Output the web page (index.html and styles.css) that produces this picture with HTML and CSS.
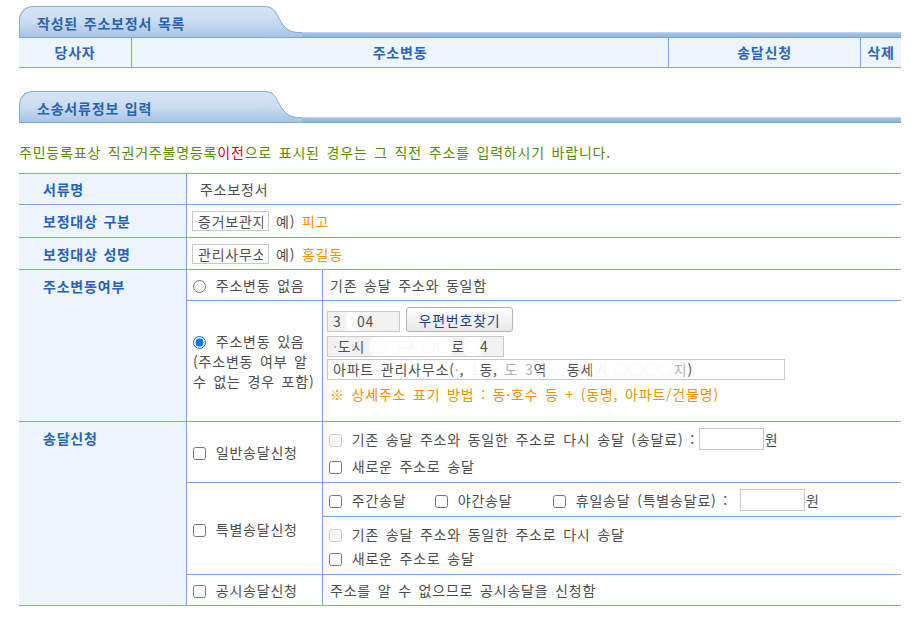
FILE: index.html
```html
<!DOCTYPE html>
<html lang="ko">
<head>
<meta charset="utf-8">
<title>주소보정서</title>
<link rel="stylesheet" href="styles.css">
</head>
<body>
<div class="page">
  <section class="sec">
    <div class="tabhead">
      <div class="tab">작성된 주소보정서 목록</div>
      <svg class="curve" viewBox="0 0 40 31" width="40" height="31"><defs><linearGradient id="g1" x1="0" y1="0" x2="0" y2="31" gradientUnits="userSpaceOnUse"><stop offset="0" stop-color="#d6e5f5"/><stop offset="0.5" stop-color="#cadcf0"/><stop offset="1" stop-color="#a7c4e5"/></linearGradient></defs><path d="M0 0 H2 C10 0 13 4 16 10 C20 18 25 26 36 26 H40 V31 H0 Z" fill="url(#g1)"/><path d="M0 0.5 H2 C10 0.5 13 4.5 16 10.5 C20 18.5 25 26.5 36 26.5 H40" fill="none" stroke="#86acda"/></svg>
      <div class="bar"></div>
    </div>
    <div class="list">
      <div>당사자</div><div>주소변동</div><div>송달신청</div><div>삭제</div>
    </div>
  </section>

  <section class="sec sec2">
    <div class="tabhead">
      <div class="tab">소송서류정보 입력</div>
      <svg class="curve" viewBox="0 0 40 31" width="40" height="31"><defs><linearGradient id="g2" x1="0" y1="0" x2="0" y2="31" gradientUnits="userSpaceOnUse"><stop offset="0" stop-color="#d6e5f5"/><stop offset="0.5" stop-color="#cadcf0"/><stop offset="1" stop-color="#a7c4e5"/></linearGradient></defs><path d="M0 0 H2 C10 0 13 4 16 10 C20 18 25 26 36 26 H40 V31 H0 Z" fill="url(#g2)"/><path d="M0 0.5 H2 C10 0.5 13 4.5 16 10.5 C20 18.5 25 26.5 36 26.5 H40" fill="none" stroke="#86acda"/></svg>
      <div class="bar"></div>
    </div>

    <p class="notice">주민등록표상 직권거주불명등록<span class="red">이전</span>으로 표시된 경우는 그 직전 주소를 입력하시기 바랍니다.</p>

    <div class="form">
      <div class="c lab">서류명</div>
      <div class="c span2 val">주소보정서</div>

      <div class="c lab">보정대상 구분</div>
      <div class="c span2 ex"><input type="text" class="in-short" value="증거보관자"><span class="hint">예) <span class="orange">피고</span></span></div>

      <div class="c lab">보정대상 성명</div>
      <div class="c span2 ex"><input type="text" class="in-short" value="관리사무소"><span class="hint">예) <span class="orange">홍길동</span></span></div>

      <div class="c lab top rs2">주소변동여부</div>
      <div class="c opt"><label><input type="radio" name="chg"> 주소변동 없음</label></div>
      <div class="c txt">기존 송달 주소와 동일함</div>
      <div class="c opt pr"><label class="wrap"><input type="radio" name="chg" checked> 주소변동 있음 (주소변동 여부 알 수 없는 경우 포함)</label></div>
      <div class="c addr">
        <div class="zrow"><div class="field ro zip">3 <span class="sm">1</span>04</div><button type="button" class="btn">우편번호찾기</button></div>
        <div class="field ro a1"><span class="sm2">·</span>도시 <span class="sm">○○구 ○○</span>로<span class="sm">○</span>4</div>
        <div class="field a2">아파트 관리사무소(<span class="sm2">·</span>, <span class="sm">1</span>동, <span class="sm2">도</span> <span class="sm2">3</span>역<span class="sm">.○</span>동세<span class="sm">권 ○○○○</span><span class="sm2">지</span>)</div>
        <p class="orange note">※ 상세주소 표기 방법 : 동·호수 등 + (동명, 아파트/건물명)</p>
      </div>

      <div class="c lab top rs4">송달신청</div>
      <div class="c opt"><label><input type="checkbox"> 일반송달신청</label></div>
      <div class="c lines g4">
        <div class="ln h24"><label><input type="checkbox" disabled> 기존 송달 주소와 동일한 주소로 다시 송달 (송달료) : </label><input type="text" class="fee fee1"><span class="won">원</span></div>
        <div class="ln"><label><input type="checkbox"> 새로운 주소로 송달</label></div>
      </div>
      <div class="c opt rs2"><label><input type="checkbox"> 특별송달신청</label></div>
      <div class="c opt3">
        <label class="w1"><input type="checkbox"> 주간송달</label>
        <label class="w2"><input type="checkbox"> 야간송달</label>
        <label><input type="checkbox"> 휴일송달 (특별송달료) : </label><input type="text" class="fee fee2"><span class="won">원</span>
      </div>
      <div class="c lines g2">
        <div class="ln"><label><input type="checkbox" disabled> 기존 송달 주소와 동일한 주소로 다시 송달</label></div>
        <div class="ln"><label><input type="checkbox"> 새로운 주소로 송달</label></div>
      </div>
      <div class="c opt"><label><input type="checkbox"> 공시송달신청</label></div>
      <div class="c txt">주소를 알 수 없으므로 공시송달을 신청함</div>
    </div>
  </section>
</div>
</body>
</html>
```

FILE: styles.css
```css
* { box-sizing: border-box; }

body {
  margin: 0;
  background: #fff;
  font-family: "Noto Sans CJK KR", "Noto Sans", sans-serif;
  font-size: 14px;
  color: #4d4d4d;
  word-spacing: 2px;
  letter-spacing: 0.8px;
}

.page { padding: 6px 14px 0 19px; }

.tabhead {
  display: flex;
  align-items: flex-end;
  height: 32px;
  border-bottom: 1px solid #7ea6d8;
}

.tab {
  flex: none;
  width: 243px;
  height: 31px;
  border: 1px solid #86acda;
  border-right: 0;
  border-bottom: 0;
  border-top-left-radius: 14px;
  background: linear-gradient(#d6e5f5, #cadcf0 50%, #a7c4e5);
  padding: 2px 0 0 17px;
  line-height: 28px;
  font-weight: bold;
  color: #2b62b0;
  word-spacing: 1px;
}

.curve { flex: none; display: block; width: 40px; height: 31px; }

.bar {
  flex: 1;
  height: 5px;
  background: linear-gradient(#c3d6ee 0, #c3d6ee 1px, #a2c0e4 1px, #94b7e0);
}

.list {
  display: grid;
  grid-template-columns: 112px 536px 191px 1fr;
  column-gap: 1px;
  background: #7aa7e0;
  border-bottom: 1px solid #7aa7e0;
}

.list div {
  background: #eef4fb;
  height: 29px;
  line-height: 29px;
  text-align: center;
  font-weight: bold;
  color: #2a64bc;
}

.sec2 { margin-top: 23px; }

.notice {
  margin: 19px 0 11px;
  line-height: 20px;
  color: #5a8c00;
}

.red { color: #e60012; }
.orange { color: #f29100; }

.form {
  display: grid;
  grid-template-columns: 167px 135px 1fr;
  grid-template-rows: 30px 32px 31px 30px 120px 60px 33px 57px 30px;
  gap: 1px;
  background: #7aa7e0;
  border-top: 1px solid #7aa7e0;
  border-bottom: 1px solid #7aa7e0;
}

.c {
  background: #fff;
  display: flex;
  align-items: center;
  line-height: 20px;
  min-width: 0;
}

.lab {
  background: #eef4fb;
  padding-left: 24px;
  font-weight: bold;
  color: #2563b9;
  word-spacing: 1px;
}

.lab.top { align-items: flex-start; padding-top: 6px; }

.span2 { grid-column: span 2; }
.rs2 { grid-row: span 2; }
.rs4 { grid-row: span 4; }

.val { padding-left: 13px; }
.ex { padding-left: 5px; }
.opt { padding-left: 6px; }
.opt.pr { padding-right: 3px; }
.txt { padding-left: 7px; }

.wrap { display: block; }

input[type="radio"],
input[type="checkbox"] {
  margin: 0 3px 0 0;
  width: 13px;
  height: 13px;
  vertical-align: -2px;
}

input[type="text"],
.field {
  font: inherit;
  word-spacing: 2px;
  letter-spacing: 0.8px;
  margin: 0;
  border: 1px solid #c8c8c8;
  padding: 0 5px;
  color: #505050;
  background: #fff;
  outline: none;
}

.in-short { width: 77px; height: 20px; }

.hint { margin-left: 7px; }

.field {
  height: 21px;
  line-height: 19px;
  white-space: nowrap;
  overflow: hidden;
}

.ro { background: #f2f2f2; }

.sm {
  color: #f6f6f6;
  background: #fff;
  border-radius: 7px;
  box-shadow: 0 0 3px 2px #fff;
}
.sm2 { color: #b0b0b0; }

.addr {
  flex-direction: column;
  align-items: flex-start;
  justify-content: flex-start;
  padding: 6px 0 0 4px;
}

.zrow { display: flex; align-items: flex-end; gap: 6px; }

.zip { width: 73px; }

.btn {
  width: 107px;
  height: 25px;
  margin: 0;
  padding: 0;
  font: inherit;
  word-spacing: normal;
  letter-spacing: 0.8px;
  line-height: 22px;
  color: #1f3e8c;
  border: 1px solid #b3b3b3;
  border-radius: 3px;
  background: linear-gradient(#fefefe, #e8e8e8);
}

.a1 { width: 177px; margin-top: 4px; }
.a2 { width: 458px; margin-top: 2px; }

.note { margin: 4px 0 0 3px; line-height: 20px; }

.lines {
  flex-direction: column;
  align-items: flex-start;
  justify-content: center;
  padding-left: 6px;
}

.g4 { gap: 4px; }
.g2 { gap: 2px; }

.ln { display: flex; align-items: center; height: 22px; }
.ln.h24 { height: 24px; }

.fee { width: 65px; height: 22px; }
.fee.fee1 { margin-left: 4px; }
.fee.fee2 { margin-left: 12px; }
.won { margin-left: 1px; }

.opt3 { padding-left: 6px; }
.opt3 label { flex: none; }
.opt3 .w1 { width: 106px; }
.opt3 .w2 { width: 118px; }
```
